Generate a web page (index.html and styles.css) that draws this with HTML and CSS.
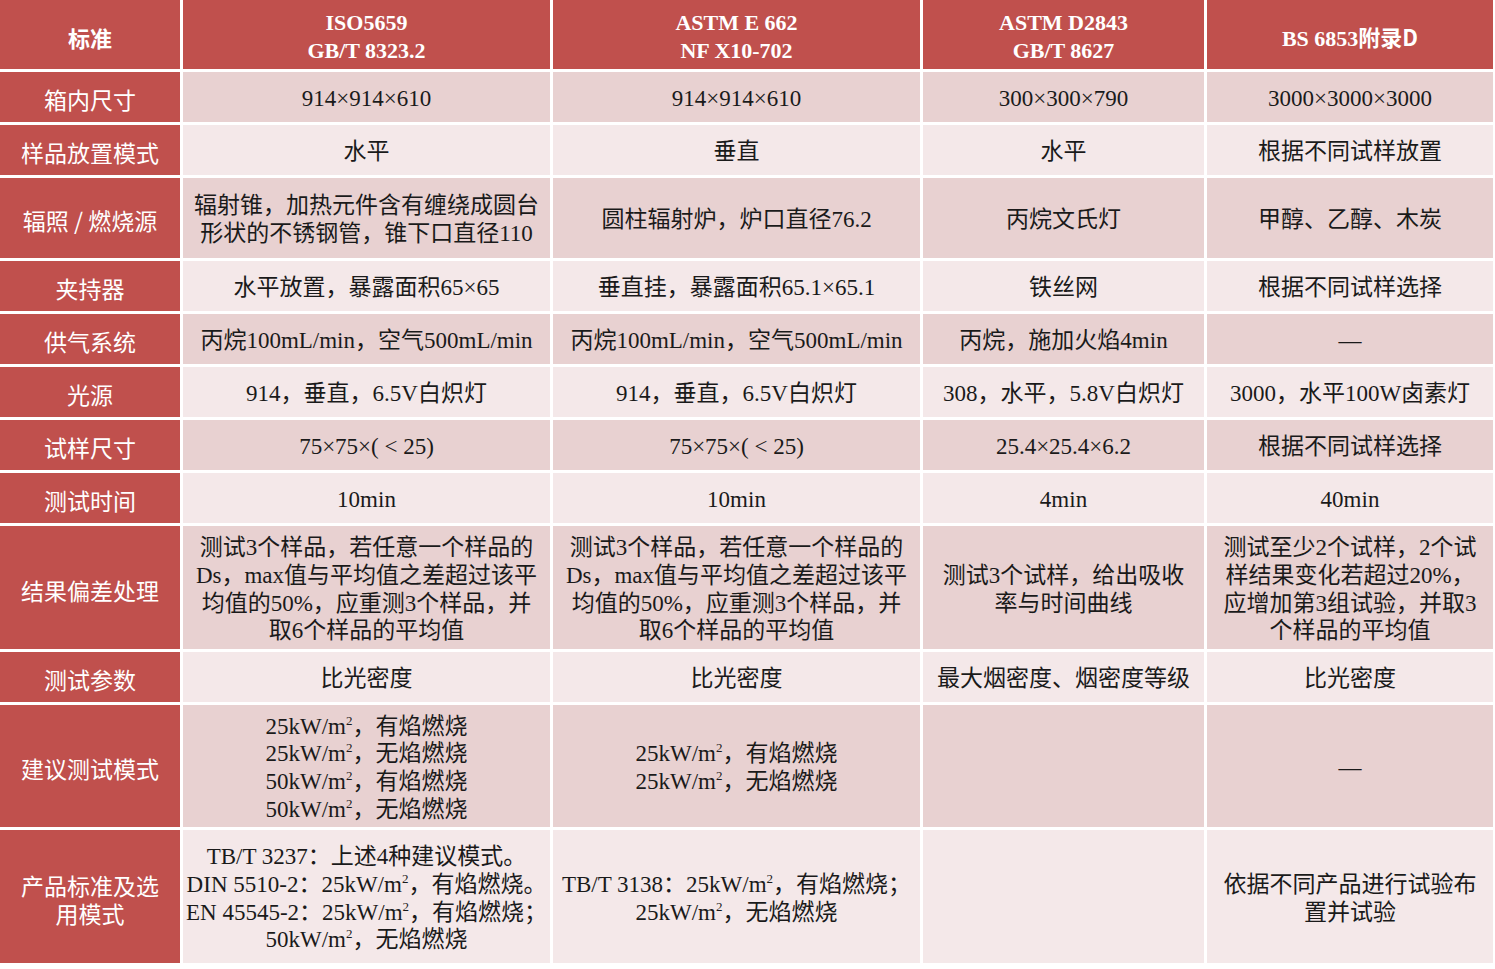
FILE: index.html
```html
<!DOCTYPE html>
<html lang="zh">
<head>
<meta charset="utf-8">
<title>烟密度测试标准对比</title>
<link rel="stylesheet" href="styles.css">
</head>
<body>
<div class="table">
  <div class="row head">
    <div class="c first"><span class="t cjk">标准</span></div>
    <div class="c"><span class="t">ISO5659<br>GB/T 8323.2</span></div>
    <div class="c"><span class="t">ASTM E 662<br>NF X10-702</span></div>
    <div class="c"><span class="t">ASTM D2843<br>GB/T 8627</span></div>
    <div class="c"><span class="t">BS 6853<span class="cjk">附录D</span></span></div>
  </div>
  <div class="row dark">
    <div class="c first"><span class="t">箱内尺寸</span></div>
    <div class="c"><span class="t">914×914×610</span></div>
    <div class="c"><span class="t">914×914×610</span></div>
    <div class="c"><span class="t">300×300×790</span></div>
    <div class="c"><span class="t">3000×3000×3000</span></div>
  </div>
  <div class="row light">
    <div class="c first"><span class="t">样品放置模式</span></div>
    <div class="c"><span class="t">水平</span></div>
    <div class="c"><span class="t">垂直</span></div>
    <div class="c"><span class="t">水平</span></div>
    <div class="c"><span class="t">根据不同试样放置</span></div>
  </div>
  <div class="row dark">
    <div class="c first"><span class="t">辐照 / 燃烧源</span></div>
    <div class="c"><span class="t">辐射锥，加热元件含有缠绕成圆台<br>形状的不锈钢管，锥下口直径110</span></div>
    <div class="c"><span class="t">圆柱辐射炉，炉口直径76.2</span></div>
    <div class="c"><span class="t">丙烷文氏灯</span></div>
    <div class="c"><span class="t">甲醇、乙醇、木炭</span></div>
  </div>
  <div class="row light">
    <div class="c first"><span class="t">夹持器</span></div>
    <div class="c"><span class="t">水平放置，暴露面积65×65</span></div>
    <div class="c"><span class="t">垂直挂，暴露面积65.1×65.1</span></div>
    <div class="c"><span class="t">铁丝网</span></div>
    <div class="c"><span class="t">根据不同试样选择</span></div>
  </div>
  <div class="row dark">
    <div class="c first"><span class="t">供气系统</span></div>
    <div class="c"><span class="t">丙烷100mL/min，空气500mL/min</span></div>
    <div class="c"><span class="t">丙烷100mL/min，空气500mL/min</span></div>
    <div class="c"><span class="t">丙烷，施加火焰4min</span></div>
    <div class="c"><span class="t">—</span></div>
  </div>
  <div class="row light">
    <div class="c first"><span class="t">光源</span></div>
    <div class="c"><span class="t">914，垂直，6.5V白炽灯</span></div>
    <div class="c"><span class="t">914，垂直，6.5V白炽灯</span></div>
    <div class="c"><span class="t">308，水平，5.8V白炽灯</span></div>
    <div class="c"><span class="t">3000，水平100W卤素灯</span></div>
  </div>
  <div class="row dark">
    <div class="c first"><span class="t">试样尺寸</span></div>
    <div class="c"><span class="t">75×75×( &lt; 25)</span></div>
    <div class="c"><span class="t">75×75×( &lt; 25)</span></div>
    <div class="c"><span class="t">25.4×25.4×6.2</span></div>
    <div class="c"><span class="t">根据不同试样选择</span></div>
  </div>
  <div class="row light">
    <div class="c first"><span class="t">测试时间</span></div>
    <div class="c"><span class="t">10min</span></div>
    <div class="c"><span class="t">10min</span></div>
    <div class="c"><span class="t">4min</span></div>
    <div class="c"><span class="t">40min</span></div>
  </div>
  <div class="row dark">
    <div class="c first"><span class="t">结果偏差处理</span></div>
    <div class="c"><span class="t">测试3个样品，若任意一个样品的<br>Ds，max值与平均值之差超过该平<br>均值的50%，应重测3个样品，并<br>取6个样品的平均值</span></div>
    <div class="c"><span class="t">测试3个样品，若任意一个样品的<br>Ds，max值与平均值之差超过该平<br>均值的50%，应重测3个样品，并<br>取6个样品的平均值</span></div>
    <div class="c"><span class="t">测试3个试样，给出吸收<br>率与时间曲线</span></div>
    <div class="c"><span class="t">测试至少2个试样，2个试<br>样结果变化若超过20%，<br>应增加第3组试验，并取3<br>个样品的平均值</span></div>
  </div>
  <div class="row light">
    <div class="c first"><span class="t">测试参数</span></div>
    <div class="c"><span class="t">比光密度</span></div>
    <div class="c"><span class="t">比光密度</span></div>
    <div class="c"><span class="t">最大烟密度、烟密度等级</span></div>
    <div class="c"><span class="t">比光密度</span></div>
  </div>
  <div class="row dark">
    <div class="c first"><span class="t">建议测试模式</span></div>
    <div class="c"><span class="t">25kW/m<sup>2</sup>，有焰燃烧<br>25kW/m<sup>2</sup>，无焰燃烧<br>50kW/m<sup>2</sup>，有焰燃烧<br>50kW/m<sup>2</sup>，无焰燃烧</span></div>
    <div class="c"><span class="t">25kW/m<sup>2</sup>，有焰燃烧<br>25kW/m<sup>2</sup>，无焰燃烧</span></div>
    <div class="c"></div>
    <div class="c"><span class="t">—</span></div>
  </div>
  <div class="row light">
    <div class="c first"><span class="t">产品标准及选<br>用模式</span></div>
    <div class="c"><span class="t">TB/T 3237：上述4种建议模式。<br>DIN 5510-2：25kW/m<sup>2</sup>，有焰燃烧。<br>EN 45545-2：25kW/m<sup>2</sup>，有焰燃烧；<br>50kW/m<sup>2</sup>，无焰燃烧</span></div>
    <div class="c"><span class="t">TB/T 3138：25kW/m<sup>2</sup>，有焰燃烧；<br>25kW/m<sup>2</sup>，无焰燃烧</span></div>
    <div class="c"></div>
    <div class="c"><span class="t">依据不同产品进行试验布<br>置并试验</span></div>
  </div>
</div>
</body>
</html>
```

FILE: styles.css
```css
html, body {
  margin: 0;
  padding: 0;
  background: #ffffff;
}

.table {
  display: grid;
  grid-template-columns: 180px 367px 367px 281px 286px;
  grid-template-rows: 69px 50px 50px 80px 50px 50px 50px 50px 50px 123px 50px 122px 133px;
  gap: 3px;
  width: 1493px;
  font-family: "Liberation Serif", "Noto Sans CJK SC", serif;
  font-size: 23px;
  line-height: 1.2;
  color: #1a1a1a;
}

.row {
  display: contents;
}

.c {
  display: flex;
  align-items: center;
  justify-content: center;
  text-align: center;
  padding: 4px 2px 0;
}

.t {
  display: block;
}

.dark .c {
  background: #e8d1d1;
}

.light .c {
  background: #f4e8e9;
}

.row .first {
  background: #c0504d;
  color: #ffffff;
  font-family: "Noto Sans CJK SC", sans-serif;
  font-size: 23px;
  line-height: 28px;
}

.head .c {
  background: #c0504d;
  color: #ffffff;
  font-weight: bold;
  font-size: 22px;
  line-height: 28px;
  padding-top: 5px;
}

.cjk {
  font-family: "Noto Sans CJK SC", sans-serif;
  font-weight: bold;
}

.t .cjk {
  display: inline;
}

sup {
  font-size: 13px;
  line-height: 0;
  vertical-align: 9px;
}
```
